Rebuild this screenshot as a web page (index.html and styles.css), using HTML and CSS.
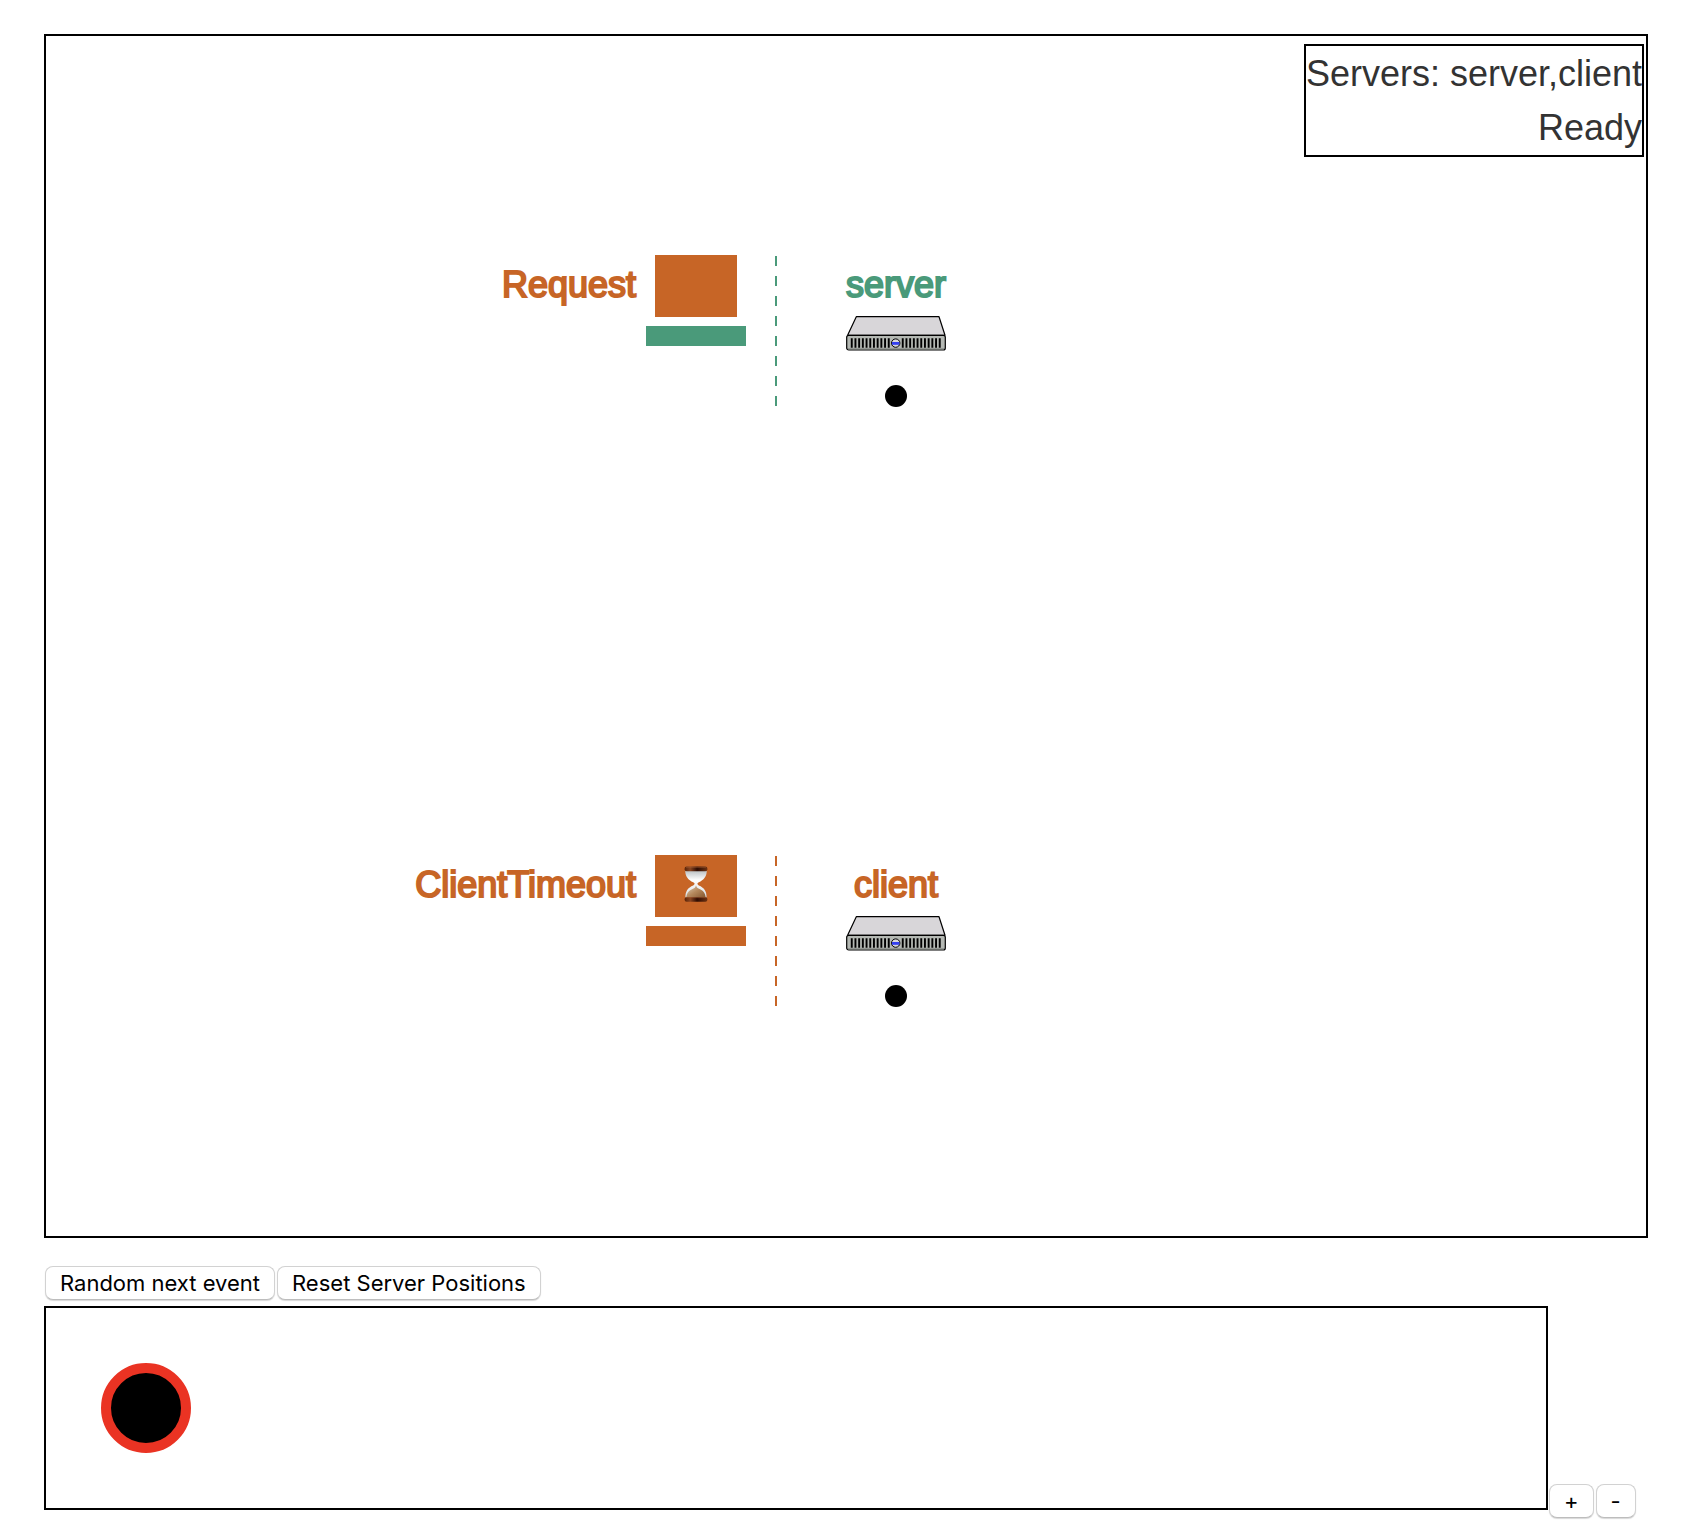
FILE: index.html
```html
<!DOCTYPE html>
<html lang="en">
<head>
<meta charset="utf-8">
<title>Servers</title>
<link rel="stylesheet" href="styles.css">
</head>
<body>
<main class="app">
  <section class="stage">
    <svg class="stage-canvas" viewBox="0 0 1600 1200">
      <defs>
        <symbol id="machine" viewBox="0 0 100 35">
          <path d="M10.3 .7H93L99 19.3H1.6Z" fill="#d8d6d9" stroke="#000" stroke-width="1.2" stroke-linejoin="round"/>
          <rect x=".7" y="19.3" width="98.6" height="14.7" rx="2" fill="#b4b8b3" stroke="#000" stroke-width="1.2"/>
          <path d="M2 33H98" stroke="#777b76" stroke-width="1"/>
          <path d="M4.8 27H43.8M55.8 27H95" stroke="#000" stroke-width="9.4" stroke-dasharray="1.9 1.8"/>
          <circle cx="49.7" cy="27.1" r="4.2" fill="#d8d8dc" stroke="#000" stroke-width="1"/>
          <path d="M46 26H53.4V28.8H46Z" fill="#3440f0"/>
        </symbol>
        <linearGradient id="wood" x1="0" x2="1" y1="0" y2="0">
          <stop offset="0" stop-color="#5a2408"/><stop offset=".25" stop-color="#8a4520"/><stop offset=".55" stop-color="#2e0c02"/><stop offset="1" stop-color="#6d3212"/>
        </linearGradient>
        <linearGradient id="glass" x1="0" x2="0" y1="0" y2="1">
          <stop offset="0" stop-color="#b9bfc2"/><stop offset=".35" stop-color="#fff"/><stop offset="1" stop-color="#d5dce2"/>
        </linearGradient>
        <linearGradient id="sand" x1="0" x2="1" y1="0" y2="1">
          <stop offset="0" stop-color="#ded0bc"/><stop offset=".5" stop-color="#b5885c"/><stop offset="1" stop-color="#80542e"/>
        </linearGradient>
        <symbol id="hourglass" viewBox="0 0 24 36">
          <path d="M1.3 4.5H22.7C23 10.5 19.5 14 14.8 16.3Q12 17.7 14.8 19.5C20 21.5 23 25.5 22.5 32H1.5C1 25.5 4 21.5 9.2 19.5Q12 17.7 9.2 16.3C4.5 14 1 10.5 1.3 4.5Z" fill="url(#glass)"/>
          <path d="M12 19.2Q12.5 22 16 23.2C20 25 21.5 28 21.7 31.8H2.3C2.5 28 4 25 8 23.2Q11.5 22 12 19.2Z" fill="url(#sand)"/>
          <rect x=".6" y=".4" width="22.8" height="4.8" rx="2" fill="url(#wood)"/>
          <rect x=".6" y="31" width="22.8" height="4.8" rx="2" fill="url(#wood)"/>
          <path d="M2 1.2H22M2 31.6H22" stroke="#a65f35" stroke-width=".6"/>
        </symbol>
      </defs>

      <g class="node node-server">
        <text class="label label-event event" x="590" y="261">Request</text>
        <rect class="event" x="609" y="219" width="82" height="62"/>
        <rect class="tray" x="600" y="290" width="100" height="20"/>
        <path class="divider" d="M730 220V370"/>
        <text class="label label-name" x="850" y="261">server</text>
        <use href="#machine" x="800" y="280" width="100" height="35"/>
        <circle cx="850" cy="360" r="11"/>
      </g>

      <g class="node node-client" transform="translate(0 600)">
        <text class="label label-event event" x="590" y="261">ClientTimeout</text>
        <rect class="event" x="609" y="219" width="82" height="62"/>
        <use href="#hourglass" x="638" y="230" width="24" height="36"/>
        <rect class="tray" x="600" y="290" width="100" height="20"/>
        <path class="divider" d="M730 220V370"/>
        <text class="label label-name" x="850" y="261">client</text>
        <use href="#machine" x="800" y="280" width="100" height="35"/>
        <circle cx="850" cy="360" r="11"/>
      </g>
    </svg>
    <div class="status">
      <div>Servers: server,client</div>
      <div>Ready</div>
    </div>
  </section>

  <div class="actions">
    <button class="button" type="button">Random next event</button>
    <button class="button" type="button">Reset Server Positions</button>
  </div>

  <section class="history">
    <svg class="trace">
      <circle class="state" cx="100" cy="100" r="40"/>
    </svg>
    <div class="zoom">
      <button class="button" type="button" aria-label="Zoom in">+</button>
      <button class="button" type="button" aria-label="Zoom out">-</button>
    </div>
  </section>
</main>
</body>
</html>
```
FILE: styles.css
```css
* {
  box-sizing: border-box;
}

body {
  margin: 0;
  background: #fff;
  color: #333;
  font-family: "Liberation Sans", Arial, sans-serif;
  font-size: 36px;
  line-height: 54px;
}

.app {
  padding: 34px 52px 6px 44px;
}

.stage {
  position: relative;
  border: 2px solid #000;
}

.stage-canvas {
  display: block;
  width: 100%;
}

.status {
  position: absolute;
  top: 8px;
  right: 2px;
  padding-top: 1px;
  border: 2px solid #000;
  text-align: right;
  white-space: nowrap;
}

.label {
  font-size: 36px;
  stroke-width: 2px;
}

.label-event {
  text-anchor: end;
}

.label-name {
  text-anchor: middle;
  fill: var(--node);
  stroke: var(--node);
}

.node-server {
  --node: #4a9a7a;
}

.node-client {
  --node: #c76526;
}

.event {
  fill: #c76526;
}

.label.event {
  stroke: #c76526;
}

.tray {
  fill: var(--node);
}

.divider {
  fill: none;
  stroke: var(--node);
  stroke-width: 2px;
  stroke-dasharray: 10 10;
}

.actions {
  display: flex;
  gap: 2px;
  padding: 28px 1px 6px;
}

.button {
  height: 34px;
  padding: 1px 14px 0;
  border: 1px solid #d2d2d2;
  border-bottom-color: #bdbdbd;
  border-radius: 8px;
  background: #fff;
  box-shadow: 0 1px 1px #d8d8d8;
  color: #000;
  font-family: Inter, sans-serif;
  font-size: 22px;
  line-height: 31px;
}

.history {
  display: flex;
  align-items: flex-end;
}

.trace {
  flex: 1;
  min-width: 0;
  height: 204px;
  margin-bottom: 8px;
  border: 2px solid #000;
}

.state {
  fill: #000;
  stroke: #ea3323;
  stroke-width: 10px;
}

.zoom {
  display: flex;
  gap: 2px;
  width: 100px;
  padding-left: 1px;
}
```
